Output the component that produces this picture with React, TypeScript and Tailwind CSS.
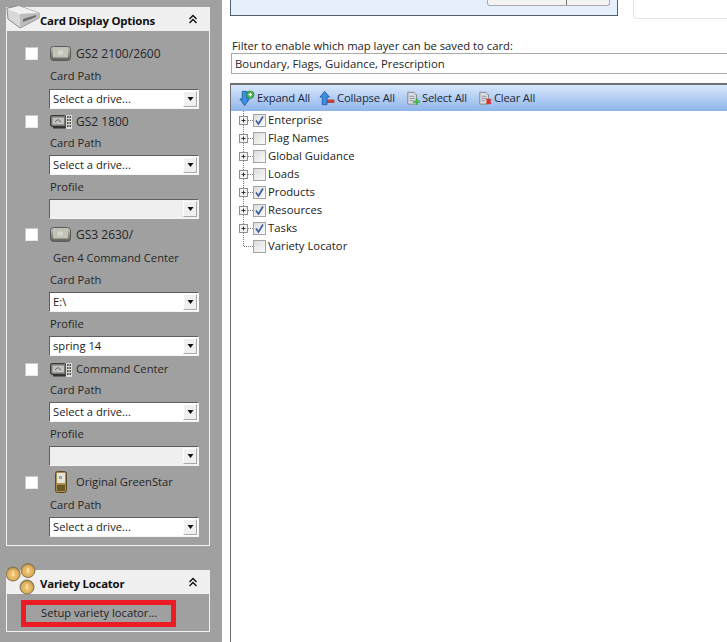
const font = "font-['Open_Sans','Noto_Sans',sans-serif]";

function DoubleChevron() {
  return (
    <svg width="10" height="10" viewBox="0 0 10 10" fill="none" stroke="#111" strokeWidth="1.4">
      <path d="M1.5 5 L5 1.5 L8.5 5" />
      <path d="M1.5 9 L5 5.5 L8.5 9" />
    </svg>
  );
}

function DriveIcon() {
  return (
    <svg width="34" height="24" viewBox="0 0 34 24">
      <path d="M1 3 L13 1 L33 8 L33 13 L14 23 L2 14 Z" fill="#d9d9d9" stroke="#8a8a8a" />
      <path d="M2 4 L14 9 L33 8 L13 1 Z" fill="#f1f1f1" />
      <path d="M14 9 L14 22 L33 13 L33 8 Z" fill="#bdbdbd" />
      <path d="M17 14 L30 10 L30 12 L17 17 Z" fill="#6e6e6e" />
    </svg>
  );
}

function CoinsIcon() {
  return (
    <svg width="36" height="32" viewBox="0 0 36 32">
      <defs>
        <radialGradient id="coin" cx="50%" cy="55%" r="55%">
          <stop offset="0%" stopColor="#f3cf7e" />
          <stop offset="70%" stopColor="#dfae58" />
          <stop offset="100%" stopColor="#8a7350" />
        </radialGradient>
      </defs>
      <circle cx="7" cy="11" r="7" fill="url(#coin)" stroke="#85755c" />
      <circle cx="22" cy="7.5" r="7" fill="url(#coin)" stroke="#85755c" />
      <circle cx="21" cy="24" r="7" fill="url(#coin)" stroke="#85755c" />
      <path d="M7 8v5M22 4.5v5M21 21v5" stroke="#fff3cf" strokeWidth="1" />
    </svg>
  );
}

function CardIcon() {
  return (
    <svg width="21" height="15" viewBox="0 0 21 15">
      <defs>
        <linearGradient id="card" x1="0" y1="0" x2="0" y2="1">
          <stop offset="0%" stopColor="#c8c8c0" />
          <stop offset="100%" stopColor="#5e5e5a" />
        </linearGradient>
      </defs>
      <rect x="0.5" y="0.5" width="20" height="14" rx="3" fill="url(#card)" stroke="#5a5a5a" />
      <rect x="3" y="2" width="15" height="9.5" rx="1" fill="#c2c2b6" />
      <rect x="8" y="4.5" width="5" height="4" fill="#d6d6ca" />
    </svg>
  );
}

function PhoneBarIcon() {
  return (
    <svg width="22" height="15" viewBox="0 0 22 15">
      <rect x="0.5" y="1.5" width="15.5" height="11" rx="1.5" fill="#77776f" stroke="#3c3c3c" />
      <rect x="2.5" y="3.5" width="11.5" height="7" fill="#bfc4c0" />
      <path d="M5 8 L8 5.5 L11 8" stroke="#666" fill="none" />
      <rect x="16" y="1" width="6" height="14" fill="#dcdcdc" />
      <path d="M17 3h1.5M19.5 3h1.5M17 6h1.5M19.5 6h1.5M17 9h1.5M19.5 9h1.5M17 12h1.5M19.5 12h1.5" stroke="#222" strokeWidth="1.6" />
      <rect x="3" y="12.5" width="13" height="2" fill="#333" />
    </svg>
  );
}

function GreenStarIcon() {
  return (
    <svg width="14" height="22" viewBox="0 0 14 22">
      <rect x="1.5" y="0.5" width="11" height="21" rx="2" fill="#a98f4f" stroke="#5c4a22" />
      <rect x="3" y="2" width="8" height="10" fill="#e4e4dc" />
      <rect x="5" y="5" width="3" height="3" fill="#9aa" />
      <rect x="3" y="14" width="8" height="6" fill="#6b5a28" />
    </svg>
  );
}

function Checkbox() {
  return <div className="ml-[18px] w-[13px] h-[13px] shrink-0 bg-white border border-[#e8e8e8] border-t-[#c8c8c8] border-l-[#c8c8c8]" />;
}

function DeviceRow({ label, icon, iconBox, labelClass, className }: { label: string; icon: React.ReactNode; iconBox?: string; labelClass?: string; className: string }) {
  return (
    <div className={`flex items-center h-5 ${className}`}>
      <Checkbox />
      <div className={`ml-[12px] w-[26px] flex shrink-0 ${iconBox ?? ""}`}>{icon}</div>
      <span className={`pt-[1px] ${labelClass ?? "text-[11.2px]"} text-[#262626]`}>{label}</span>
    </div>
  );
}

function FieldLabel({ children, className }: { children: React.ReactNode; className: string }) {
  return <div className={`ml-[43px] h-4 leading-4 text-[11.2px] text-[#262626] ${className}`}>{children}</div>;
}

function Combo({ value, disabled, className }: { value?: string; disabled?: boolean; className: string }) {
  return (
    <div
      className={`ml-[42px] w-[150px] h-5 flex items-center justify-between border border-[#f4f4f4] border-t-[#5e5e5e] border-l-[#5e5e5e] ${disabled ? "bg-[#efefef]" : "bg-white"} ${className}`}
    >
      <span className="pl-[3px] text-[11.2px] leading-4 text-[#1c1c1c]">{value}</span>
      <div className="mr-[1px] w-[14px] h-[16px] flex items-center justify-center bg-[#f0f0f0] border border-[#a8a8a8] border-t-white border-l-white">
        <svg width="7" height="4" viewBox="0 0 7 4">
          <path d="M0.5 0 H6.5 L3.5 4 Z" fill="#111" />
        </svg>
      </div>
    </div>
  );
}

function PanelHeader({ title, icon }: { title: string; icon: React.ReactNode }) {
  return (
    <div className="relative h-6 bg-[#f0f0f0] flex items-center justify-between">
      {icon}
      <span className="ml-[34px] pt-[3px] text-[11.4px] font-bold text-[#111] tracking-[-0.2px]">{title}</span>
      <div className="mr-[12px] flex"><DoubleChevron /></div>
    </div>
  );
}

function Sidebar() {
  return (
    <div className="w-[222px] shrink-0 h-full bg-[#a0a0a0] pl-[6px] pr-[12px] pt-[7px]">
      <PanelHeader
        title="Card Display Options"
        icon={<div className="absolute left-0 top-[-2px] flex"><DriveIcon /></div>}
      />
      <div className="border border-t-0 border-[#f2f2f2] pt-[12px] pb-[8px]">
        <DeviceRow label="GS2 2100/2600" icon={<CardIcon />} labelClass="text-[12px]" className="mt-0" />
        <FieldLabel className="mt-[5px]">Card Path</FieldLabel>
        <Combo value="Select a drive..." className="mt-[5px]" />
        <DeviceRow label="GS2 1800" icon={<PhoneBarIcon />} labelClass="text-[12px]" className="mt-[2px]" />
        <FieldLabel className="mt-[4px]">Card Path</FieldLabel>
        <Combo value="Select a drive..." className="mt-[4px]" />
        <FieldLabel className="mt-[4px]">Profile</FieldLabel>
        <Combo disabled className="mt-[4px]" />
        <DeviceRow label="GS3 2630/" icon={<CardIcon />} labelClass="text-[12px]" className="mt-[5px]" />
        <div className="ml-[46px] mt-[6px] h-4 leading-4 text-[11.2px] text-[#262626]">Gen 4 Command Center</div>
        <FieldLabel className="mt-[6px]">Card Path</FieldLabel>
        <Combo value="E:\" className="mt-[4px]" />
        <FieldLabel className="mt-[4px]">Profile</FieldLabel>
        <Combo value="spring 14" className="mt-[4px]" />
        <DeviceRow label="Command Center" icon={<PhoneBarIcon />} className="mt-[3px]" />
        <FieldLabel className="mt-[3px]">Card Path</FieldLabel>
        <Combo value="Select a drive..." className="mt-[4px]" />
        <FieldLabel className="mt-[4px]">Profile</FieldLabel>
        <Combo disabled className="mt-[4px]" />
        <DeviceRow label="Original GreenStar" icon={<GreenStarIcon />} iconBox="pl-[4px]" className="mt-[6px]" />
        <FieldLabel className="mt-[5px]">Card Path</FieldLabel>
        <Combo value="Select a drive..." className="mt-[4px]" />
      </div>

      <div className="mt-[24px]">
        <PanelHeader
          title="Variety Locator"
          icon={<div className="absolute left-0 top-[-7px] flex"><CoinsIcon /></div>}
        />
        <div className="border border-t-0 border-[#f2f2f2] h-[38px] pt-[6px] pl-[14px]">
          <div className="w-[155px] h-[27px] border-[5px] border-[#ed1c24] flex items-center pl-[15px]">
            <span className="text-[11.2px] text-[#1f1f1f]">Setup variety locator...</span>
          </div>
        </div>
      </div>
    </div>
  );
}

function ToolIcon({ kind }: { kind: "expand" | "collapse" | "select" | "clear" }) {
  if (kind === "expand" || kind === "collapse") {
    const up = kind === "collapse";
    return (
      <svg width="16" height="17" viewBox="0 0 17 17">
        {up ? (
          <>
            <path d="M6 1 L11 7 H8.5 V15 H3.5 V7 H1 Z" fill="#3f8fe0" stroke="#1c5fae" />
            <rect x="9" y="10" width="7" height="3" fill="#d8412f" stroke="#8f2318" strokeWidth="0.5" />
          </>
        ) : (
          <>
            <path d="M6 16 L11 9 H8.5 V1 H3.5 V9 H1 Z" fill="#3f8fe0" stroke="#1c5fae" />
            <circle cx="12" cy="4.5" r="4" fill="#3fb54a" stroke="#1e7a2a" strokeWidth="0.6" />
            <path d="M10 4.5h4M12 2.5v4" stroke="#fff" strokeWidth="1.3" />
          </>
        )}
      </svg>
    );
  }
  return (
    <svg width="14" height="16" viewBox="0 0 16 16">
      <path d="M2 1.5 H9 L12 4.5 V15 H2 Z" fill="#d9dde2" stroke="#7b7f85" />
      <path d="M4 6h6M4 8.5h6M4 11h4" stroke="#8b8f95" />
      {kind === "select" ? (
        <path d="M8 11h3V8.5h2.5V11H16v2.5h-2.5V16H11v-2.5H8z" fill="#3fb54a" />
      ) : (
        <path d="M9 9.5 L10.5 8.5 L12 10 L13.5 8.5 L15.5 10 L14 12 L15.5 14 L13.5 15.5 L12 14 L10.5 15.5 L9 14 L10.2 12 Z" fill="#dd2c2c" />
      )}
    </svg>
  );
}

function TreeRow({ label, checked, last }: { label: string; checked?: boolean; last?: boolean }) {
  return (
    <div className="h-[18px] flex items-center">
      <svg width="16" height="18" viewBox="0 0 16 18" className="shrink-0">
        <path
          d={last ? "M6.5 0 V9.5 H16" : "M6.5 0 V18 M11 9.5 H16"}
          stroke="#777"
          strokeDasharray="1 1"
          fill="none"
        />
        {!last && (
          <>
            <rect x="2.5" y="5.5" width="8" height="8" fill="#f4f4f4" stroke="#8e8e8e" />
            <path d="M4.5 9.5h4M6.5 7.5v4" stroke="#333" />
          </>
        )}
      </svg>
      <div className="w-[13px] h-[13px] shrink-0 bg-gradient-to-br from-[#dcdcdc] to-[#fbfbfb] border border-[#a4a4a4] flex items-center justify-center">
        {checked && (
          <svg width="11" height="11" viewBox="0 0 11 11" fill="none">
            <path d="M2 5.5 L4.5 9 L9 1.5" stroke="#3d5f9e" strokeWidth="1.7" />
          </svg>
        )}
      </div>
      <span className="ml-[2px] text-[11.3px] text-[#222]">{label}</span>
    </div>
  );
}

function MainPane() {
  const tools: { label: string; kind: "expand" | "collapse" | "select" | "clear"; className: string }[] = [
    { label: "Expand All", kind: "expand", className: "ml-0" },
    { label: "Collapse All", kind: "collapse", className: "ml-[9px]" },
    { label: "Select All", kind: "select", className: "ml-[11px]" },
    { label: "Clear All", kind: "clear", className: "ml-[11px]" },
  ];
  const layers = [
    { label: "Enterprise", checked: true },
    { label: "Flag Names" },
    { label: "Global Guidance" },
    { label: "Loads" },
    { label: "Products", checked: true },
    { label: "Resources", checked: true },
    { label: "Tasks", checked: true },
    { label: "Variety Locator", last: true },
  ];

  return (
    <div className="flex-1 min-w-0 h-full bg-white pl-[8px] flex flex-col">
      <div className="flex items-start h-[37px] shrink-0">
        <div className="w-[388px] h-[16px] border border-t-0 border-[#55606e] bg-[#e6effc] flex justify-end pr-[7px]">
          <div className="relative w-[123px] h-[6px] bg-[#f3f3f3] border border-t-0 border-[#ababab] rounded-b-[3px]">
            <div className="absolute right-[42px] top-0 w-px h-full bg-[#777]" />
          </div>
        </div>
        <div className="ml-[15px] flex-1 h-[19px] border-l border-b border-[#e4e4e4] rounded-bl-[4px]" />
      </div>
      <div className="ml-[2px] h-[16px] leading-[18px] text-[11.25px] text-[#222]">Filter to enable which map layer can be saved to card:</div>
      <div className="ml-[1px] h-[21px] border border-r-0 border-[#a9a9a9] flex items-center pl-[3px] text-[11.35px] text-[#262626] shrink-0">
        Boundary, Flags, Guidance, Prescription
      </div>
      <div className="mt-[9px] flex-1 border-l border-[#6f6f6f] flex flex-col min-h-0">
        <div className="h-[28px] border-t-2 border-[#6f6f6f] bg-gradient-to-b from-[#d9e7fb] to-[#8fb5ea] flex items-center pl-[8px] shrink-0">
          {tools.map((t) => (
            <div key={t.label} className={`flex items-center gap-[2px] ${t.className}`}>
              <ToolIcon kind={t.kind} />
              <span className="text-[11.3px] text-[#1d2a3a] tracking-[-0.2px]">{t.label}</span>
            </div>
          ))}
        </div>
        <div className="pl-[6px]">
          {layers.map((l) => (
            <TreeRow key={l.label} label={l.label} checked={l.checked} last={l.last} />
          ))}
        </div>
      </div>
    </div>
  );
}

export default function App() {
  return (
    <div className={`w-[727px] h-[642px] overflow-hidden flex bg-white ${font}`}>
      <Sidebar />
      <MainPane />
    </div>
  );
}
